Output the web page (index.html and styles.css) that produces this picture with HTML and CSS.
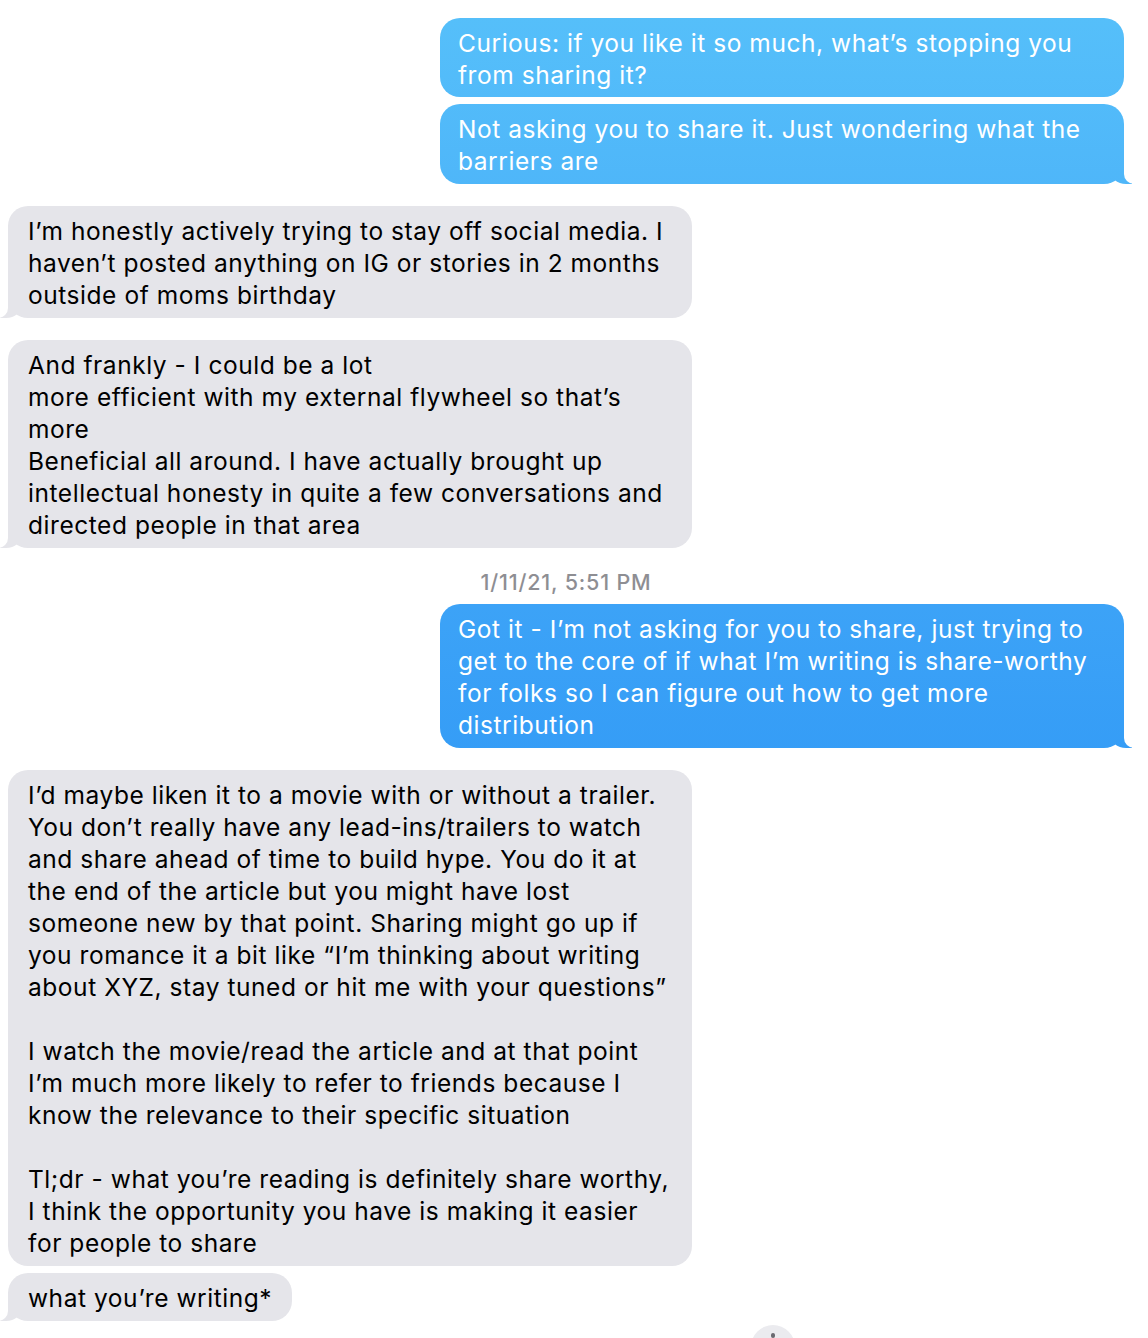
FILE: index.html
```html
<!DOCTYPE html>
<html lang="en">
<head>
    <meta charset="UTF-8">
    <meta name="viewport" content="width=device-width, initial-scale=1.0">
    <title>Messages</title>
    <link rel="stylesheet" href="styles.css">
</head>
<body>
    <!-- Conversation -->
    <div class="thread">
        <div class="bubble sent wide">Curious: if you like it so much, what’s stopping you<br>from sharing it?</div>
        <div class="bubble sent wide tail">Not asking you to share it. Just wondering what the<br>barriers are</div>

        <div class="bubble received wide tail group-gap">I’m honestly actively trying to stay off social media. I<br>haven’t posted anything on IG or stories in 2 months<br>outside of moms birthday</div>
        <div class="bubble received wide tail group-gap">And frankly - I could be a lot<br>more efficient with my external flywheel so that’s<br>more<br>Beneficial all around. I have actually brought up<br>intellectual honesty in quite a few conversations and<br>directed people in that area</div>

        <div class="timestamp">1/11/21, 5:51 PM</div>

        <div class="bubble sent wide tail">Got it - I’m not asking for you to share, just trying to<br>get to the core of if what I’m writing is share-worthy<br>for folks so I can figure out how to get more<br>distribution</div>

        <div class="bubble received wide group-gap">I’d maybe liken it to a movie with or without a trailer.<br>You don’t really have any lead-ins/trailers to watch<br>and share ahead of time to build hype. You do it at<br>the end of the article but you might have lost<br>someone new by that point. Sharing might go up if<br>you romance it a bit like “I’m thinking about writing<br>about XYZ, stay tuned or hit me with your questions”<br><br>I watch the movie/read the article and at that point<br>I’m much more likely to refer to friends because I<br>know the relevance to their specific situation<br><br>Tl;dr - what you’re reading is definitely share worthy,<br>I think the opportunity you have is making it easier<br>for people to share</div>
        <div class="bubble received tail">what you’re writing*</div>
    </div>

    <!-- Scroll-down button peeking at the bottom -->
    <div class="scroll-btn"><span class="scroll-dot"></span></div>
</body>
</html>
```

FILE: styles.css
```css
/* General */
body {
    margin: 0;
    background: #ffffff;
    font-family: 'Inter', 'Noto Sans', sans-serif;
    overflow: hidden;
    height: 1338px;
    position: relative;
}

.thread {
    display: flex;
    flex-direction: column;
    padding: 18px 24px 0 8px;
    gap: 7px;
}

/* Bubbles */
.bubble {
    position: relative;
    box-sizing: border-box;
    width: fit-content;
    max-width: 684px;
    padding: 9px 20px 7px 20px;
    border-radius: 20px;
    font-size: 24.5px;
    line-height: 32px;
    white-space: nowrap;
    letter-spacing: 0.55px;
}

.bubble.wide {
    width: 684px;
}

.bubble.sent.wide:first-child {
    padding-bottom: 6px;
}

.group-gap {
    margin-top: 15px;
}

.sent {
    align-self: flex-end;
    color: #ffffff;
    padding-left: 18px;
    background: linear-gradient(180deg, #56c0fa 0px, #46abf8 400px, #339bf6 800px, #2b8ff4 1338px);
    background-attachment: fixed;
}

.sent.tail + .received {
    margin-top: 15px;
}

.received {
    align-self: flex-start;
    color: #000000;
    background: #e5e5ea;
}

/* Tails */
.bubble.tail::before,
.bubble.tail::after {
    content: "";
    position: absolute;
    bottom: 0;
    height: 24px;
}

.sent.tail::before {
    right: -8px;
    width: 22px;
    background: linear-gradient(180deg, #56c0fa 0px, #46abf8 400px, #339bf6 800px, #2b8ff4 1338px);
    background-attachment: fixed;
    border-bottom-left-radius: 16px 14px;
}

.sent.tail::after {
    right: -26px;
    width: 26px;
    background: #ffffff;
    border-bottom-left-radius: 10px;
}

.received.tail::before {
    left: -8px;
    width: 22px;
    background: #e5e5ea;
    border-bottom-right-radius: 16px 14px;
}

.received.tail::after {
    left: -26px;
    width: 26px;
    background: #ffffff;
    border-bottom-right-radius: 10px;
}

/* Timestamp */
.timestamp {
    margin: 15px 0 3px;
    text-align: center;
    font-size: 21.5px;
    line-height: 24px;
    font-weight: 500;
    letter-spacing: 0.8px;
    color: #8e8e93;
}

/* Scroll button */
.scroll-btn {
    position: absolute;
    left: 751px;
    top: 1325px;
    width: 44px;
    height: 44px;
    border-radius: 50%;
    background: #ebebef;
}

.scroll-dot {
    position: absolute;
    left: 20px;
    top: 8px;
    width: 4px;
    height: 5px;
    border-radius: 2px;
    background: #6a6a70;
}
```
